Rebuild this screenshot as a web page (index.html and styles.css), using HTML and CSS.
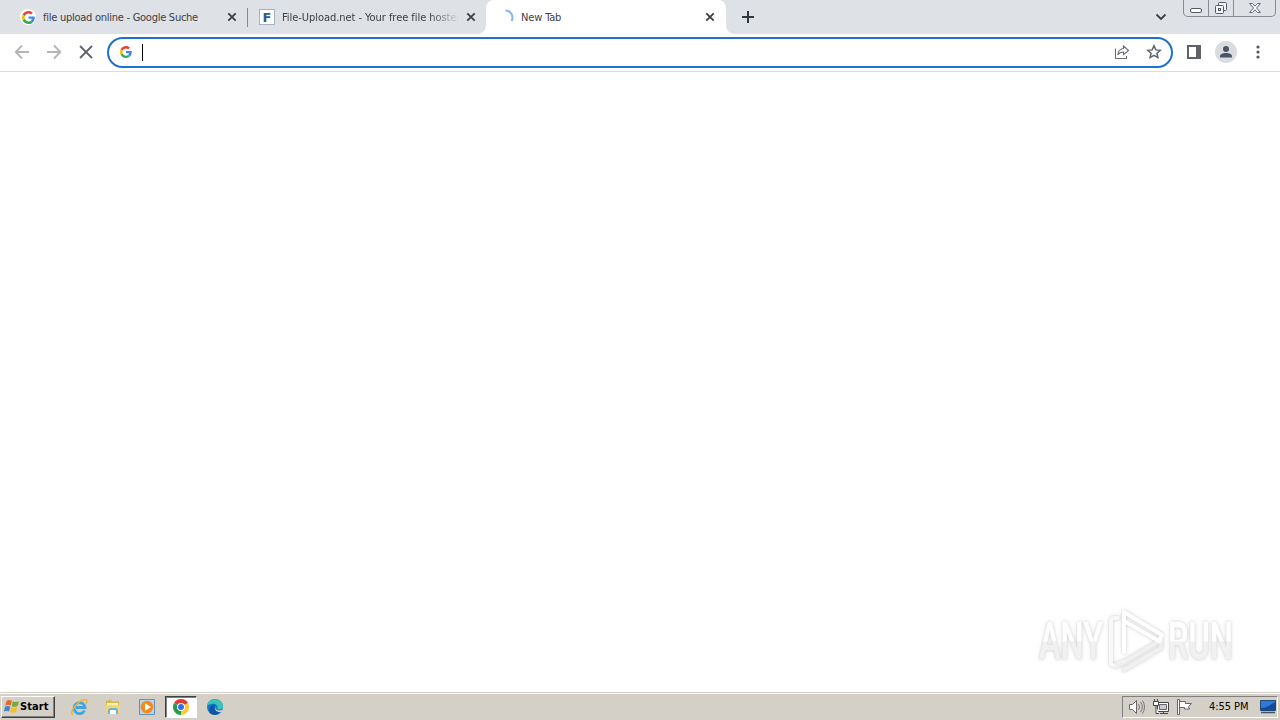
FILE: index.html
```html
<!DOCTYPE html>
<html lang="en">
<head>
    <meta charset="UTF-8">
    <meta name="viewport" content="width=device-width, initial-scale=1.0">
    <title>New Tab</title>
    <link rel="stylesheet" href="styles.css">
</head>
<body>
    <svg class="defs" width="0" height="0">
        <symbol id="google" viewBox="0 0 48 48">
            <path fill="#ea4335" d="M24 9.5c3.5 0 6.700 1.200 9.200 3.600l6.900-6.900C35.900 2.400 30.500 0 24 0 14.600 0 6.500 5.400 2.600 13.200l8 6.200C12.400 13.700 17.700 9.500 24 9.500z"/>
            <path fill="#4285f4" d="M47 24.500c0-1.600-.2-3.100-.4-4.500H24v9h12.900c-.6 3-2.300 5.500-4.800 7.200l7.700 6C44.400 38 47 31.800 47 24.500z"/>
            <path fill="#fbbc05" d="M10.500 28.600a14.500 14.500 0 0 1 0-9.200l-8-6.200a24 24 0 0 0 0 21.600z"/>
            <path fill="#34a853" d="M24 48c6.500 0 11.900-2.100 15.900-5.800l-7.700-6c-2.200 1.500-4.900 2.300-8.200 2.300-6.300 0-11.600-4.200-13.500-9.900l-8 6.200C6.500 42.600 14.600 48 24 48z"/>
        </symbol>
        <symbol id="close" viewBox="0 0 10 10">
            <path d="M1.300 1.300l7.400 7.400M8.700 1.300l-7.400 7.400" stroke="#3c4043" stroke-width="1.8"/>
        </symbol>
    </svg>

    <div class="tabs">
        <div class="tab">
            <span class="favicon round"><svg width="13" height="13"><use href="#google"/></svg></span>
            <span class="title"><span class="t1">file upload online - Google Suche</span></span>
            <svg class="x" width="10" height="10"><use href="#close"/></svg>
        </div>
        <div class="tab split">
            <span class="favicon letter">F</span>
            <span class="title fade"><span class="t2">File-Upload.net - Your free file hoster</span></span>
            <svg class="x" width="10" height="10"><use href="#close"/></svg>
        </div>
        <div class="tab active">
            <span class="favicon"><svg width="16" height="16"><path d="M7.500 1.500A7 7 0 0 1 13.500 12" fill="none" stroke="#8ab4f8" stroke-width="2"/></svg></span>
            <span class="title"><span class="t3">New Tab</span></span>
            <svg class="x" width="10" height="10"><use href="#close"/></svg>
        </div>
        <svg class="plus" width="12" height="12"><path d="M6 0v12M0 6h12" stroke="#303640" stroke-width="2"/></svg>
        <svg class="chevron" width="12" height="8"><path d="M1.500 1.500L6 6l4.500-4.500" fill="none" stroke="#3c4043" stroke-width="1.800"/></svg>
        <div class="window-buttons">
            <span class="min"><svg width="14" height="16"><rect x="1.500" y="8.500" width="11" height="4" rx="1.500" fill="#fff" stroke="#555b66"/></svg></span>
            <span class="max"><svg width="14" height="16"><g fill="#f4f5f7" stroke="#555b66"><rect x="4.500" y="2.500" width="8" height="8" rx="1"/><rect x="1.500" y="5.500" width="8" height="8" rx="1"/><rect x="4.500" y="8.500" width="2" height="2"/></g></svg></span>
            <span class="quit"><svg width="14" height="16"><path d="M1.500 3.500h3l2.500 2.700 2.500-2.700h3l-4 4.500 4 4.500h-3L7 9.800l-2.500 2.700h-3l4-4.500z" fill="#fff" stroke="#666c76"/></svg></span>
        </div>
    </div>

    <div class="toolbar">
        <svg class="nav" width="16" height="16" viewBox="0 0 16 16"><path d="M15 8H2M8 1.500L1.700 8 8 14.500" fill="none" stroke="#b3b5b8" stroke-width="1.800"/></svg>
        <svg class="nav" width="16" height="16" viewBox="0 0 16 16"><path d="M1 8h13M8 1.500L14.300 8 8 14.500" fill="none" stroke="#b3b5b8" stroke-width="1.800"/></svg>
        <svg class="nav" width="16" height="16" viewBox="0 0 16 16"><path d="M2 2l12 12M14 2L2 14" stroke="#5f6368" stroke-width="1.800"/></svg>
        <div class="omnibox">
            <svg width="12" height="12"><use href="#google"/></svg>
            <span class="caret"></span>
            <svg class="share" width="16" height="16" viewBox="0 0 16 16"><path d="M1.500 4.500v10h11V12M9.500 2l5 4.500-5 4V8C7 8 5 9 3.800 11 4 7.500 6 5 9.500 4.500z" fill="none" stroke="#6c7075" stroke-width="1.100"/></svg>
            <svg class="star" width="16" height="16" viewBox="0 0 16 16"><path d="M8 1.900l1.850 4 4.350.45-3.250 2.900.95 4.300L8 11.300l-3.900 2.250.95-4.300L1.800 6.350l4.350-.45z" fill="none" stroke="#5f6368" stroke-width="1.500"/></svg>
        </div>
        <svg class="panel" width="14" height="14"><path d="M1 1h12v12H1z" fill="#fff" stroke="#5f6368" stroke-width="2"/><path d="M9 1h4v12H9z" fill="#5f6368"/></svg>
        <svg class="avatar" width="22" height="22"><circle cx="11" cy="11" r="11" fill="#dadce0"/><circle cx="11" cy="8" r="3" fill="#4a5368"/><path d="M5 16.500v-1.300c0-2 3-3.200 6-3.200s6 1.200 6 3.200v1.300z" fill="#4a5368"/></svg>
        <svg class="dots" width="4" height="14" fill="#55595e"><circle cx="2" cy="2" r="1.600"/><circle cx="2" cy="7" r="1.600"/><circle cx="2" cy="12" r="1.600"/></svg>
    </div>

    <div class="page">
        <svg class="watermark" width="210" height="76" viewBox="0 0 210 76">
            <defs>
                <linearGradient id="fill" gradientUnits="userSpaceOnUse" x1="0" y1="18" x2="0" y2="56">
                    <stop offset=".5" stop-color="#fff"/>
                    <stop offset=".52" stop-color="#f1f1f1"/>
                </linearGradient>
            </defs>
            <g class="glow">
                <text x="9" y="55" textLength="64" lengthAdjust="spacingAndGlyphs">ANY</text>
                <text x="138" y="55" textLength="65" lengthAdjust="spacingAndGlyphs">RUN</text>
                <g fill="none" stroke-linejoin="round" stroke-linecap="round" stroke-width="4">
                    <path d="M88 14h-4q-3 0-3 3v43l4 2 9-5" stroke="#f8f8f8"/>
                    <path d="M87 62l7-4M94 66l37-22v-8L94 58" stroke="#f0f0f0"/>
                    <path d="M94 48V8l38 23-3 6-35-20" stroke="#fff"/>
                </g>
            </g>
        </svg>
    </div>

    <div class="taskbar">
        <div class="start">
            <svg width="16" height="15" viewBox="0 0 16 15"><path d="M2.500 2q2.700-2 5.300-.2L6.600 6.600Q4 5 1.200 6.700z" fill="#e96427"/><path d="M8.800 2.300q2.600 1.600 6.200 0l-1.300 4.800q-3 1.600-6-.2z" fill="#73ac35"/><path d="M1 7.800q2.700-1.600 5.300 0L5 12.500q-2.500-1.700-5 0z" fill="#3d83cb"/><path d="M7.400 8.200q3 1.500 6 0L12 13q-3 1.500-6-.2z" fill="#f7bf27"/></svg>
            <span>Start</span>
        </div>
        <div class="launch">
            <span><svg width="18" height="18" viewBox="0 0 18 18"><path d="M14.500 12.500A5.500 5.500 0 1 1 15 9.500H6" fill="none" stroke="#42a5df" stroke-width="2.800"/><path d="M3 16.500C-2 14 10 1 15.500 1.500c2 .2 1.500 2.500.5 4" fill="none" stroke="#e8b536" stroke-width="1.500"/></svg></span>
            <span><svg width="16" height="16" viewBox="0 0 16 16"><path d="M1 2l5-1 1 1.500h7V13H1z" fill="#d9b64d"/><path d="M2 4h11v8H2z" fill="#fff3b2"/><path d="M1 6h14v8H1z" fill="#f3d775"/><path d="M4 15v-3.500q0-1.500 1.500-1.500h5q1.500 0 1.500 1.500V15" fill="#fff" stroke="#69b5dc" stroke-width="2"/></svg></span>
            <span><svg width="16" height="16" viewBox="0 0 16 16"><path d="M.5.500h15v15H.5z" fill="#b9d6ee" stroke="#5e91bd"/><circle cx="8" cy="8" r="6.300" fill="#f28a1c"/><path d="M6 4.200l6 3.800-6 3.800z" fill="#fff"/></svg></span>
            <span class="pressed"><svg width="16" height="16" viewBox="0 0 16 16"><path d="M1.070 4A8 8 0 0 1 14.930 4L8 8z" fill="#e33b2e"/><path d="M14.930 4A8 8 0 0 1 8 16L8 8z" fill="#fcc934"/><path d="M8 16A8 8 0 0 1 1.070 4L8 8z" fill="#279b4b"/><circle cx="8" cy="8" r="4" fill="#fff"/><circle cx="8" cy="8" r="3" fill="#2c73e8"/></svg></span>
            <span><svg width="16" height="16" viewBox="0 0 16 16"><circle cx="8" cy="8" r="8" fill="#1479c9"/><path d="M0 7C1-1 14-3 16 7c.3 3-3 4-6 3 1-1 1-4-2-5-3-.8-6 0-8 2z" fill="#38c6b4"/><path d="M3 14C1 9 4 5 8 6c-2 3 1 7 6 6-2 4-8 5-11 2z" fill="#1255a4"/><path d="M8.500 7c-1.500 3 2 6 7.500 3.500l-1.500 2.500c-5 1-8-3-6-6z" fill="#d4d0c8"/></svg></span>
        </div>
        <div class="tray">
            <svg class="sound" width="17" height="16" viewBox="0 0 17 16"><path d="M.5 5.500h3l4-4v13l-4-4h-3z" fill="#fff" stroke="#666"/><path d="M9.500 5q2 3 0 6M11.500 3q3.500 5 0 10M13.500 1.500q4 6.500 0 13" fill="none" stroke="#777"/></svg>
            <svg class="network" width="17" height="16" viewBox="0 0 17 16"><path d="M4.500 3.500h11v9h-11z" fill="#fff" stroke="#444"/><path d="M6.500 5.500h7v5h-7z" fill="#ccc" stroke="#666"/><path d="M7 14.500h8M10.500 12v2" stroke="#444"/><path d="M.5 2.500h5v4h-5zM1.500 0v2M4.500 0v2M3 7v7.500h3" fill="#fff" stroke="#444"/></svg>
            <svg class="flag" width="16" height="16" viewBox="0 0 16 16"><path d="M.5 15.500v-15h2v15zM2.500 2.500h6v2h6l-3 3 1 2.500h-5V8.500h-5z" fill="#fff" stroke="#666"/></svg>
            <span class="clock">4:55 PM</span>
            <svg class="desktop" width="16" height="14" viewBox="0 0 16 14"><path d="M.5.500h15v10H.5z" fill="#2f7ad4" stroke="#234977"/><path d="M1 8Q7 8 15 2v8H1z" fill="#174999"/><path d="M1 12.500h14" stroke="#41546e" stroke-width="1.500"/></svg>
        </div>
    </div>
</body>
</html>
```
FILE: styles.css
```css
* {
    box-sizing: border-box;
}
body {
    margin: 0;
    height: 720px;
    display: flex;
    flex-direction: column;
    overflow: hidden;
    background: #fff;
    font-family: "DejaVu Sans Condensed", "DejaVu Sans", sans-serif;
    font-size: 11px;
    color: #3c4043;
}
svg {
    display: block;
    flex: none;
}
.defs {
    position: absolute;
}
.tabs {
    display: flex;
    height: 34px;
    padding: 0 4px 0 8px;
    background: #dee1e6;
}
.tab {
    position: relative;
    display: flex;
    align-items: center;
    width: 239px;
    padding-left: 12px;
}
.tab.split::before {
    content: "";
    position: absolute;
    left: 0;
    top: 8px;
    width: 1px;
    height: 19px;
    background: #85888d;
}
.tab.active {
    width: 240px;
    background: #fff;
    border-radius: 8px 8px 0 0;
}
.tab.active::before,
.tab.active::after {
    content: "";
    position: absolute;
    bottom: 0;
    left: -8px;
    width: 8px;
    height: 8px;
    background: radial-gradient(circle at 0 0, transparent 7.5px, #fff 8px);
}
.tab.active::after {
    left: auto;
    right: -8px;
    background: radial-gradient(circle at 100% 0, transparent 7.5px, #fff 8px);
}
.favicon {
    display: flex;
    align-items: center;
    justify-content: center;
    width: 16px;
    height: 16px;
}
.round {
    background: #fff;
    border-radius: 50%;
}
.letter {
    background: #fff;
    border: 1px solid #a3b3c5;
    color: #315b8a;
    font: bold 13px "DejaVu Sans", sans-serif;
}
.title {
    width: 176px;
    margin-left: 7px;
    padding-top: 1px;
    overflow: hidden;
    white-space: nowrap;
    line-height: 16px;
}
.t1 {
    letter-spacing: -0.26px;
}
.t2 {
    letter-spacing: -0.05px;
}
.t3 {
    letter-spacing: -0.15px;
}
.fade {
    -webkit-mask-image: linear-gradient(to right, #000 148px, transparent 178px);
    mask-image: linear-gradient(to right, #000 148px, transparent 178px);
}
.x {
    margin-left: 8px;
}
.plus {
    margin: 11px 0 0 16px;
}
.chevron {
    margin: 13px 16px 0 auto;
}
.window-buttons {
    display: flex;
    width: 93px;
    height: 17px;
    border: 1px solid #878b93;
    border-top: 0;
    border-radius: 0 0 5px 5px;
}
.window-buttons span {
    display: flex;
    justify-content: center;
}
.window-buttons .min,
.window-buttons .max {
    width: 25px;
    border-right: 1px solid #878b93;
}
.window-buttons .quit {
    flex: 1;
}
.toolbar {
    display: flex;
    align-items: center;
    height: 38px;
    padding: 0 20px 1px 14px;
    border-bottom: 1px solid #dadce0;
}
.nav {
    margin-right: 16px;
}
.omnibox {
    display: flex;
    align-items: center;
    width: 1066px;
    height: 31px;
    margin-left: -3px;
    padding: 0 9px 0 11px;
    border: 2px solid #1f70d0;
    border-radius: 16px;
}
.caret {
    width: 1px;
    height: 17px;
    margin-left: 10px;
    background: #000;
}
.share {
    margin-left: auto;
}
.star {
    margin-left: 16px;
}
.panel {
    margin-left: 14px;
}
.avatar {
    margin-left: 14px;
}
.dots {
    margin-left: 19px;
}
.page {
    display: flex;
    flex: 1;
    align-items: flex-end;
    justify-content: flex-end;
    padding: 0 40px 12px 0;
}
.watermark {
    overflow: visible;
}
.watermark text {
    font: 500 51px Roboto, sans-serif;
    fill: url(#fill);
    stroke: url(#fill);
    stroke-width: 0.6px;
}
.glow {
    filter: drop-shadow(0 0 1px rgba(0, 0, 0, 0.12)) drop-shadow(0 0 2px rgba(0, 0, 0, 0.12));
}
.taskbar {
    display: flex;
    align-items: center;
    height: 28px;
    padding: 2px 2px 2px 1px;
    background: #d4d0c8;
    border-top: 1px solid #d4d0c8;
    box-shadow: inset 0 1px #fff;
    color: #000;
}
.start {
    display: flex;
    align-items: center;
    width: 54px;
    height: 22px;
    padding-left: 2px;
    border: 1px solid;
    border-color: #fff #404040 #404040 #fff;
    box-shadow: inset -1px -1px #808080;
    font-weight: bold;
    letter-spacing: 0.1px;
}
.launch {
    display: flex;
    margin-left: 8px;
}
.launch span {
    display: flex;
    align-items: center;
    justify-content: center;
    width: 32px;
    height: 22px;
    margin-right: 2px;
}
.launch .pressed {
    background: #fff;
    border: 1px solid;
    border-color: #404040 #fff #fff #404040;
    box-shadow: inset 1px 1px #808080;
}
.tray {
    display: flex;
    align-items: center;
    width: 156px;
    height: 22px;
    margin-left: auto;
    padding-left: 6px;
    border: 1px solid;
    border-color: #808080 #fff #fff #808080;
}
.network {
    margin-left: 7px;
}
.flag {
    margin-left: 7px;
}
.clock {
    width: 51px;
    margin-left: 16px;
    white-space: nowrap;
    letter-spacing: -0.05px;
}
```
